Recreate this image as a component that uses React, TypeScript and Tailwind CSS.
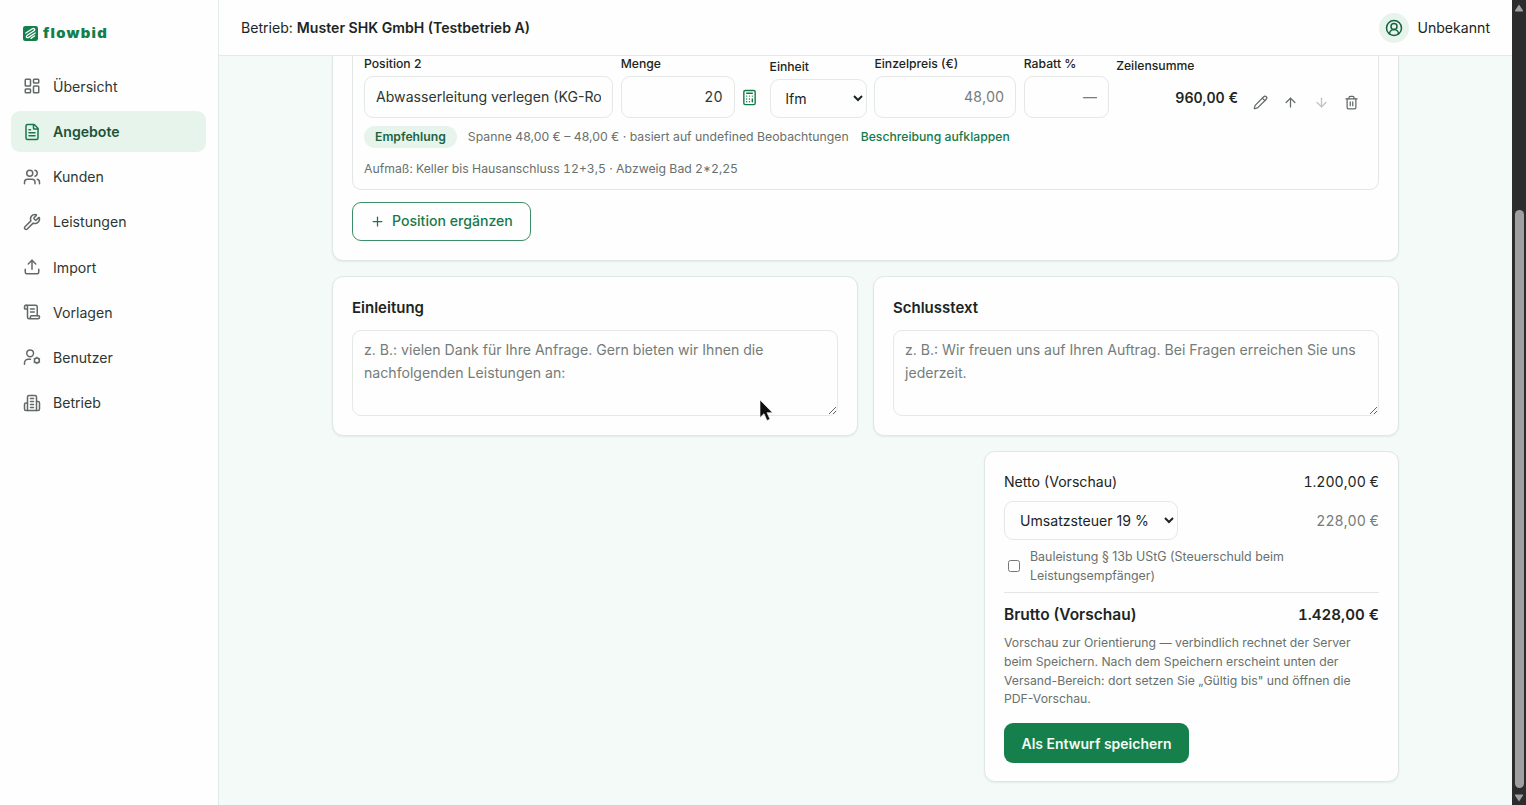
import type { ReactNode } from 'react';
import {
  ArrowDown,
  ArrowUp,
  Calculator,
  CircleUserRound,
  FileText,
  LayoutDashboard,
  Pencil,
  Plus,
  ScrollText,
  Trash2,
  Upload,
  Users,
  Wrench,
} from 'lucide-react';

function BuildingIcon() {
  return (
    <svg width="18" height="18" viewBox="0 0 24 24" fill="none" stroke="currentColor" strokeWidth="2" strokeLinecap="round" strokeLinejoin="round">
      <path d="M6 22V4a2 2 0 0 1 2-2h8a2 2 0 0 1 2 2v18Z" />
      <path d="M6 12H4a2 2 0 0 0-2 2v6a2 2 0 0 0 2 2h2" />
      <path d="M18 10h2a2 2 0 0 1 2 2v8a2 2 0 0 1-2 2h-2" />
      <path d="M10 6h4M10 10h4M10 14h4M10 18h4" />
    </svg>
  );
}

function UserGearIcon() {
  return (
    <svg width="18" height="18" viewBox="0 0 24 24" fill="none" stroke="currentColor" strokeWidth="2" strokeLinecap="round" strokeLinejoin="round">
      <circle cx="9.500" cy="7" r="4.500" />
      <path d="M2 21.500V20a5 5 0 0 1 5-5h3" />
      <circle cx="18.500" cy="16.500" r="3.300" />
      <path d="M18.500 12v1M18.500 20v1M14.600 14.200l.9.5M21.500 18.300l.9.5M14.600 18.800l.9-.5M21.500 14.700l.9-.5" strokeWidth="1.300" />
    </svg>
  );
}

function Logo() {
  return (
    <div className="flex h-4 items-center gap-[5px] pl-3 text-[#157f4b]">
      <svg width="15" height="15" viewBox="0 0 16 16">
        <rect width="16" height="16" rx="2.500" fill="currentColor" />
        <path d="M3 7.500 9.500 3.200c2.500-1.500 4 .6 2.300 1.900L4.500 9.800c-2 1.400-.6 3.600 1.400 2.300L13 7.500" fill="none" stroke="#fff" strokeWidth="1.400" strokeLinecap="round" />
        <path d="M8.500 13.200l4-2.700" stroke="#fff" strokeWidth="1.300" strokeLinecap="round" />
      </svg>
      <span className="origin-left scale-x-[1.140] text-[13px] leading-4 font-black tracking-[1.100px]">flowbid</span>
    </div>
  );
}

const navItems: { label: string; icon: ReactNode; active?: boolean }[] = [
  { label: 'Übersicht', icon: <LayoutDashboard size={18} /> },
  { label: 'Angebote', icon: <FileText size={18} />, active: true },
  { label: 'Kunden', icon: <Users size={18} /> },
  { label: 'Leistungen', icon: <Wrench size={18} /> },
  { label: 'Import', icon: <Upload size={18} /> },
  { label: 'Vorlagen', icon: <ScrollText size={18} /> },
  { label: 'Benutzer', icon: <UserGearIcon /> },
  { label: 'Betrieb', icon: <BuildingIcon /> },
];

function Sidebar() {
  return (
    <aside className="w-[219px] shrink-0 border-r border-[#e2ebe7] bg-[#fefefe] px-[11px] pt-[25px]">
      <Logo />
      <nav className="mt-[24.600px] flex flex-col gap-[3.700px]">
        {navItems.map((item) => (
          <a
            key={item.label}
            className={
              item.active
                ? 'flex h-[41.500px] w-[195px] items-center gap-3 rounded-[9px] bg-[#e6f4ec] px-3 font-semibold text-[#1c5338]'
                : 'flex h-[41.500px] w-[195px] items-center gap-3 rounded-[9px] px-3 text-[#2d3733]'
            }
          >
            <span className={item.active ? 'text-[#17794a]' : 'text-[#626966]'}>{item.icon}</span>
            {item.label}
          </a>
        ))}
      </nav>
    </aside>
  );
}

function Header() {
  return (
    <header className="flex h-14 shrink-0 items-center justify-between border-b border-[#e2ebe7] bg-[#fefefe] px-[22px] pt-px">
      <div>
        Betrieb: <span className="font-semibold">Muster SHK GmbH (Testbetrieb A)</span>
      </div>
      <div className="flex items-center gap-2">
        <span className="flex h-[30px] w-[30px] items-center justify-center rounded-full bg-[#e6f4ec] text-[#17613e]">
          <CircleUserRound size={18} />
        </span>
        Unbekannt
      </div>
    </header>
  );
}

function Field({ label, className, children }: { label: string; className: string; children: ReactNode }) {
  return (
    <label className={className}>
      <span className="block text-[12.200px] leading-[18px] font-medium">{label}</span>
      {children}
    </label>
  );
}

const inputClass = 'mt-[3px] h-[42px] w-full rounded-[9px] border border-[#e4e8e6] bg-[#fefefe] px-[11px] pb-px text-[#2d3733] placeholder:text-[#757c79]';

function PositionCard() {
  return (
    <section className="rounded-b-[11px] border border-t-0 border-[#dfe8e4] bg-[#fefefe] px-[19px] pb-[19px] shadow-[0_1px_2px_rgba(20,60,40,0.07)]">
      <div className="h-[134px] rounded-b-[9px] border border-t-0 border-[#e2e6e4] px-[11px]">
        <div className="flex h-[62px] items-end">
          <Field label="Position 2" className="w-[249px]">
            <input className={inputClass} defaultValue="Abwasserleitung verlegen (KG-Rohr DN 110)" />
          </Field>
          <Field label="Menge" className="ml-2 w-[114px]">
            <input className={`${inputClass} text-right tabular-nums`} defaultValue="20" />
          </Field>
          <button className="flex h-[42px] w-[30px] items-center justify-center text-[#17794a]">
            <Calculator size={17} />
          </button>
          <Field label="Einheit" className="ml-[5px] w-[98px]">
            <select className="mt-[3px] h-[39px] w-full rounded-[9px] border border-[#e4e8e6] bg-[#fefefe] pl-[11px]">
              <option>lfm</option>
            </select>
          </Field>
          <Field label="Einzelpreis (€)" className="ml-[7px] w-[142px]">
            <input className={`${inputClass} text-right tabular-nums`} placeholder="48,00" />
          </Field>
          <Field label="Rabatt %" className="ml-[7.500px] w-[85.500px]">
            <input className={`${inputClass} text-right`} placeholder="—" />
          </Field>
          <div className="ml-[7px] w-[122px]">
            <div className="text-[12.200px] leading-[18px] font-medium">Zeilensumme</div>
            <div className="mt-1 flex h-[39px] items-start justify-end pt-[8px] leading-[22px] font-semibold tabular-nums">960,00 €</div>
          </div>
          <div className="ml-[7px] flex h-8 items-center text-[#626966]">
            <span className="flex w-[30.500px] justify-center"><Pencil size={15} /></span>
            <span className="flex w-[30.500px] justify-center"><ArrowUp size={15} /></span>
            <span className="flex w-[30.500px] justify-center opacity-40"><ArrowDown size={15} /></span>
            <span className="flex w-[30.500px] justify-center"><Trash2 size={15} /></span>
          </div>
        </div>
        <div className="mt-2 flex h-[22px] items-center text-[12.200px] text-[#69716d]">
          <span className="rounded-full bg-[#e6f4ec] px-[11px] leading-[22px] font-semibold text-[#1c6341]">Empfehlung</span>
          <span className="ml-[11px] text-[12.260px]">Spanne 48,00 € – 48,00 € · basiert auf undefined Beobachtungen</span>
          <button className="ml-[12px] font-medium text-[#17794a]">Beschreibung aufklappen</button>
        </div>
        <p className="mt-3 text-[12.250px] leading-[18px] text-[#69716d] tabular-nums">
          Aufmaß: Keller bis Hausanschluss 12+3,5 · Abzweig Bad 2*2,25
        </p>
      </div>
      <button className="mt-3 flex h-[39px] w-[179px] items-center rounded-[9px] border border-[#3d8d67] pb-px pl-[17px] font-medium text-[#17794a]">
        <Plus size={15} className="mr-[7px]" />
        Position ergänzen
      </button>
    </section>
  );
}

function TextCard({ title, placeholder }: { title: string; placeholder: string }) {
  return (
    <section className="h-[160px] rounded-[11px] border border-[#dfe8e4] bg-[#fefefe] px-[19px] pt-5 shadow-[0_1px_2px_rgba(20,60,40,0.07)]">
      <h2 className="text-[15px] leading-[22px] font-semibold">{title}</h2>
      <textarea
        className="mt-[11px] block h-[86px] w-full rounded-[9px] border border-[#e4e8e6] bg-[#fefefe] px-[11px] py-[8px] leading-[22.500px] placeholder:text-[#757c79]"
        placeholder={placeholder}
      />
    </section>
  );
}

function Summary() {
  return (
    <section className="ml-auto h-[331px] w-[415px] rounded-[11px] border border-[#dfe8e4] bg-[#fefefe] px-[19px] pt-[19px] shadow-[0_1px_2px_rgba(20,60,40,0.07)]">
      <div className="flex justify-between leading-[22px]">
        <span>Netto (Vorschau)</span>
        <span className="tabular-nums">1.200,00 €</span>
      </div>
      <div className="mt-2 flex items-center justify-between">
        <select className="h-[39px] w-[174px] rounded-[9px] border border-[#e4e8e6] bg-[#fefefe] pl-[11px]">
          <option>Umsatzsteuer 19 %</option>
        </select>
        <span className="text-[#757c79] tabular-nums">228,00 €</span>
      </div>
      <label className="mt-[7px] flex items-center text-[12.400px] leading-[19px] text-[#69716d]">
        <input type="checkbox" className="mr-[10px] ml-1 h-3 w-3" />
        <span className="w-[290px]">Bauleistung § 13b UStG (Steuerschuld beim Leistungsempfänger)</span>
      </label>
      <div className="mt-[7px] flex justify-between border-t border-[#e2e6e4] pt-[10px] text-[15.500px] leading-[24px] font-semibold">
        <span>Brutto (Vorschau)</span>
        <span className="text-[15.100px] tabular-nums">1.428,00 €</span>
      </div>
      <p className="mt-[7px] text-[12.220px] leading-[18.750px] text-[#69716d]">
        Vorschau zur Orientierung — verbindlich rechnet der Server
        <br />
        beim Speichern. Nach dem Speichern erscheint unten der
        <br />
        Versand-Bereich: dort setzen Sie „Gültig bis" und öffnen die
        <br />
        PDF-Vorschau.
      </p>
      <button className="mt-[14px] h-10 w-[185px] rounded-[9px] bg-[#15804b] text-[14px] font-semibold text-[#f4fbf7]">Als Entwurf speichern</button>
    </section>
  );
}

function Scrollbar() {
  return (
    <div className="flex w-[14px] shrink-0 flex-col items-center bg-[#2c2c2c]">
      <svg width="10" height="8" viewBox="0 0 10 8" className="mt-1 fill-[#9f9f9f]">
        <path d="M5 .5 9 6.500a.7.7 0 0 1-.6 1H1.600a.7.7 0 0 1-.6-1Z" />
      </svg>
      <div className="mt-[198px] h-[578px] w-[9px] rounded-full bg-[#9f9f9f]" />
      <svg width="10" height="8" viewBox="0 0 10 8" className="mt-[6px] fill-[#9f9f9f]">
        <path d="M5 7.500 1 1.500a.7.7 0 0 1 .6-1h6.800a.7.7 0 0 1 .6 1Z" />
      </svg>
    </div>
  );
}

export default function App() {
  return (
    <div className="relative flex h-[805px] w-[1526px] overflow-hidden bg-[#f3faf7] font-['Inter',sans-serif] text-[14.100px] text-[#1c2522]">
      <Sidebar />
      <div className="flex min-w-0 flex-1 flex-col">
        <Header />
        <main className="mx-auto w-[1067px] flex-1">
          <PositionCard />
          <div className="mt-[15px] mb-[15px] grid grid-cols-2 gap-[15px]">
            <TextCard title="Einleitung" placeholder="z. B.: vielen Dank für Ihre Anfrage. Gern bieten wir Ihnen die nachfolgenden Leistungen an:" />
            <TextCard title="Schlusstext" placeholder="z. B.: Wir freuen uns auf Ihren Auftrag. Bei Fragen erreichen Sie uns jederzeit." />
          </div>
          <Summary />
        </main>
      </div>
      <Scrollbar />
      {/* mouse pointer */}
      <svg className="absolute top-[399px] left-[759px]" width="15" height="23" viewBox="0 0 15 23">
        <path d="M1 1v17.500l4-3.800 3 6.800 3-1.300-3-6.500h5.500Z" fill="#0c0f0e" stroke="#fff" strokeWidth=".6" />
      </svg>
    </div>
  );
}
